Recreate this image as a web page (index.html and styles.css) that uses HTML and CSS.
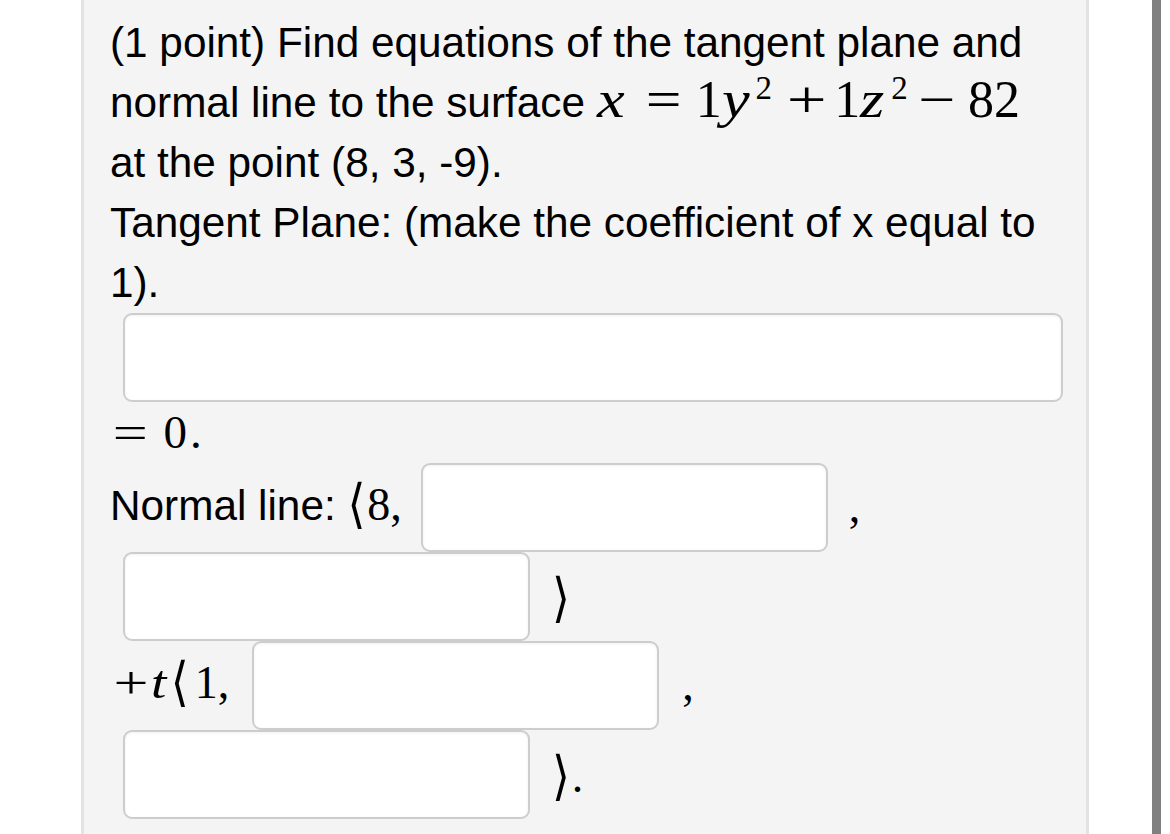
FILE: index.html
```html
<!DOCTYPE html>
<html lang="en">
<head>
<meta charset="utf-8">
<title>Tangent plane and normal line</title>
<link rel="stylesheet" href="styles.css">
</head>
<body>
<div class="page">
  <main class="panel">
    <p class="q">(1 point) Find equations of the tangent plane and<br>normal line to the surface <span class="m m-lg"><span class="mi w">x</span><span class="op eq-l">=</span><span class="mn">1</span><span class="mi w">y</span><sup class="sup">2</sup><span class="op plus-l">+</span><span class="mn">1</span><span class="mi w">z</span><sup class="sup">2</sup><span class="op minus-l">−</span><span class="mn">82</span></span><br>at the point (8, 3, -9).<br>Tangent Plane: (make the coefficient of x equal to<br>1).</p>
    <div class="row row-big"><input class="ans big" type="text" aria-label="Tangent plane"></div>
    <div class="eqrow"><span class="m m-eq"><span class="op eq0">=</span><span class="mn zero">0</span>.</span></div>
    <div class="row">
      <span class="txt">Normal line: <span class="m m-md"><span class="br">⟨</span>8,</span></span>
      <input class="ans sm gap-l" type="text" aria-label="Normal line y">
      <span class="m m-md after">,</span>
    </div>
    <div class="row">
      <input class="ans sm lead" type="text" aria-label="Normal line z">
      <span class="m m-md after2"><span class="br">⟩</span></span>
    </div>
    <div class="row">
      <span class="txt"><span class="m m-md"><span class="op plus0">+</span><span class="mi w">t</span><span class="br br-t">⟨</span>1,</span></span>
      <input class="ans sm gap-l2" type="text" aria-label="Direction y">
      <span class="m m-md after3">,</span>
    </div>
    <div class="row">
      <input class="ans sm lead" type="text" aria-label="Direction z">
      <span class="m m-md after2"><span class="br">⟩</span>.</span>
    </div>
  </main>
  <div class="bar"></div>
</div>
</body>
</html>
```
FILE: styles.css
```css
html, body {
  margin: 0;
  background: #ffffff;
}
body {
  font-family: "Liberation Sans", Arial, Helvetica, sans-serif;
  color: #000;
}
.page {
  display: flex;
  align-items: stretch;
  min-height: 834px;
  padding-left: 81px;
}
.panel {
  box-sizing: border-box;
  width: 1008px;
  background: #f4f4f4;
  border-left: 3px solid #e3e3e3;
  border-right: 3px solid #e3e3e3;
  padding: 13px 20px 0 26px;
}
.bar {
  width: 9px;
  margin-left: 63px;
  background: #808080;
}
.q {
  margin: 0;
  font-size: 42.3px;
  line-height: 60px;
}
.m {
  font-family: "Liberation Serif", "Times New Roman", serif;
  line-height: 1;
  white-space: nowrap;
}
.m-lg { font-size: 52px; }
.m-md { font-size: 46px; }
.m-eq { font-size: 47px; }
.mi { font-style: italic; }
.w {
  display: inline-block;
  transform: scaleX(1.2);
  transform-origin: left center;
  margin-right: 0.09em;
}
.op {
  display: inline-block;
  transform: scaleX(1.22);
}
.eq-l { margin: 0 17px 0 25px; }
.plus-l { margin: 0 13px 0 20px; transform: scaleX(1.36); }
.minus-l { margin: 0 17px 0 14px; transform: scaleX(1.27); }
.sup {
  font-size: 33px;
  vertical-align: 18px;
  line-height: 0;
  margin-left: 6px;
}
.br {
  font-family: "DejaVu Sans", "DejaVu Serif", sans-serif;
  font-weight: 200;
  display: inline-block;
  transform: scaleY(1.15);
  margin-right: 0.04em;
}
.row {
  display: flex;
  align-items: center;
}
.row-big {
  padding-left: 13px;
}
.ans {
  display: block;
  box-sizing: border-box;
  height: 89px;
  margin: 0;
  padding: 0 12px;
  background: #fff;
  border: 2px solid #cdcdcd;
  border-radius: 9px;
  box-shadow: inset 0 1px 3px rgba(0,0,0,0.06);
  font-size: 36px;
  outline: none;
}
.big { width: 940px; }
.sm { width: 407px; }
.lead { margin-left: 13px; }
.gap-l { margin-left: 19px; }
.gap-l2 { margin-left: 23px; }
.eqrow {
  height: 61px;
  line-height: 61px;
}
.eqrow .m { line-height: 61px; }
.eq0 { margin: 0 20px 0 7px; transform: scaleX(1.32); }
.zero { margin-right: 3px; }
.plus0 { margin: 0 7px 0 8px; transform: scaleX(1.35); }
.br-t { margin-left: 3px; margin-right: 6px; }
.txt {
  font-size: 42.3px;
  line-height: 50px;
  white-space: nowrap;
  position: relative;
  top: -2px;
}
.after { margin-left: 21px; position: relative; top: -1px; }
.after2 { margin-left: 22px; position: relative; top: 2px; }
.after3 { margin-left: 23px; position: relative; top: -1px; }
```
